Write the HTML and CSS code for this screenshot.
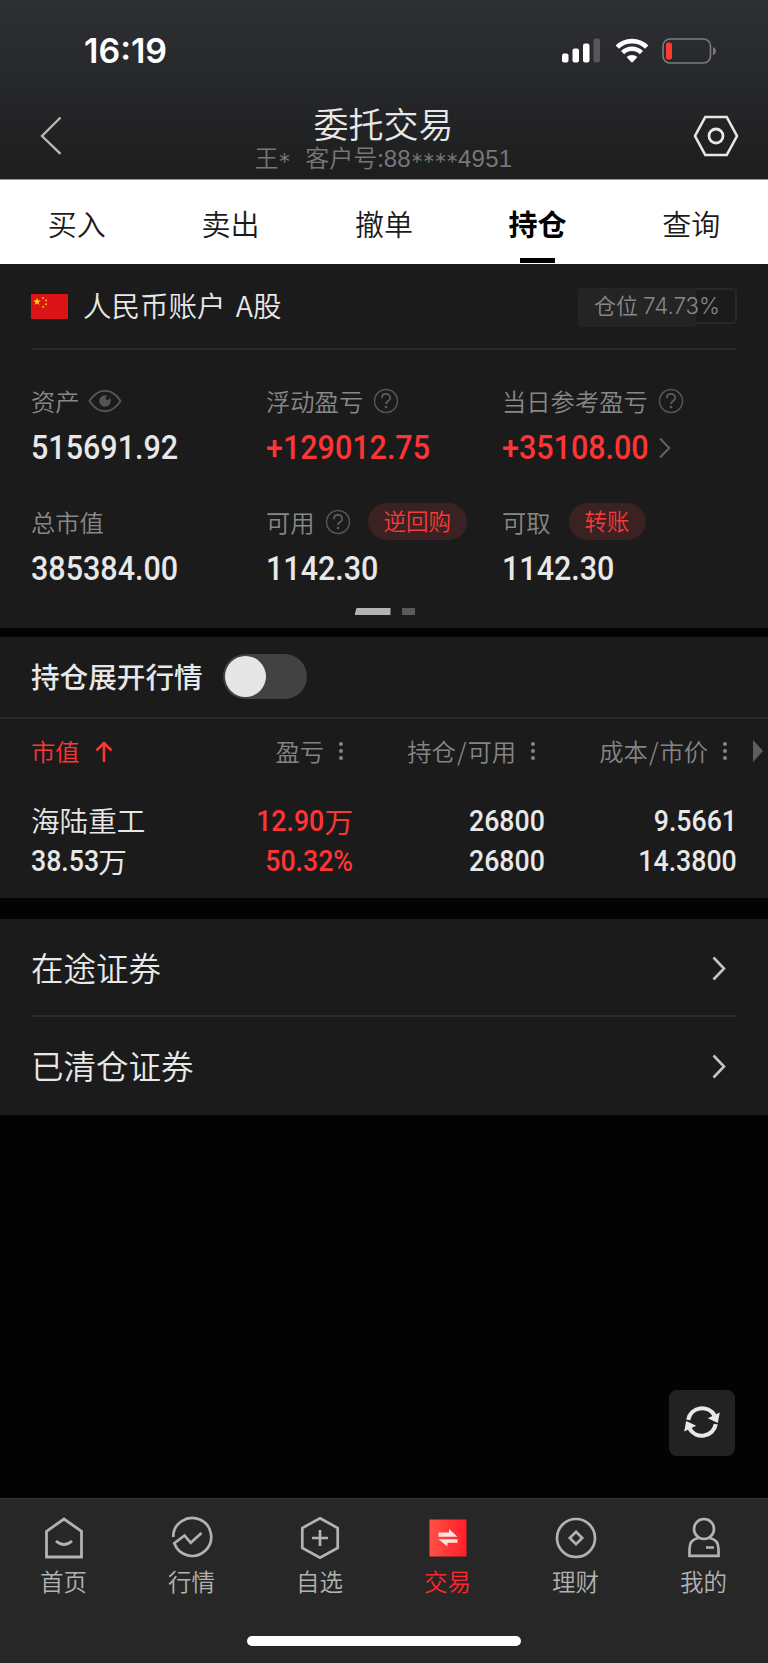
FILE: index.html
```html
<!DOCTYPE html>
<html lang="zh-CN">
<head>
<meta charset="utf-8">
<title>委托交易</title>
<link rel="stylesheet" href="styles.css">
</head>
<body>
<div class="app">
  <header class="header">
    <div class="status">
      <span class="time">16:19</span>
      <div class="status-icons">
        <svg class="signal" width="40" height="26" viewBox="0 0 40 26"><rect x="1" y="15.500" width="6.500" height="9" rx="2" fill="#fff"/><rect x="11.500" y="10.500" width="6.500" height="14" rx="2" fill="#fff"/><rect x="22" y="5.500" width="6.500" height="19" rx="2" fill="#fff"/><rect x="32.500" y="0.500" width="6.500" height="24" rx="2" fill="#56575b"/></svg>
        <svg class="wifi" width="34" height="26" viewBox="0 0 34 26"><g fill="none" stroke="#fff" stroke-width="4.600"><path d="M2.300 9.200a20.800 20.800 0 0 1 29.400 0"/><path d="M7.600 14.600a13.300 13.300 0 0 1 18.800 0"/></g><path d="M11.600 19.100a8 8 0 0 1 10.800 0l-4.300 4.600q-1.100 1.200-2.200 0z" fill="#fff"/></svg>
        <svg class="battery" width="55" height="26" viewBox="0 0 55 26"><rect x="1" y="1" width="47.500" height="24" rx="7" fill="none" stroke="#7b7c7f" stroke-width="1.600"/><path d="M51 9q2.800 1 2.800 4T51 17z" fill="#7b7c7f"/><rect x="4" y="4.500" width="6" height="17" rx="2" fill="#ff3b30"/></svg>
      </div>
    </div>
    <div class="titlebar">
      <svg class="back" width="24" height="40" viewBox="0 0 24 40"><path d="M20.500 1.500 2 20l18.500 17.800" fill="none" stroke="#b9b9b9" stroke-width="2.300"/></svg>
      <div class="titles">
        <h1 class="title">委托交易</h1>
        <p class="subtitle">王<span class="star">*</span><span class="client">客户号:<span class="masked">88</span><span class="stars">****</span><span class="masked">4951</span></span></p>
      </div>
      <svg class="settings" width="46" height="42" viewBox="0 0 46 42"><path d="M12.300 2h21.400L44 21 33.700 40H12.300L2 21z" fill="none" stroke="#e6e6e6" stroke-width="2.600"/><circle cx="23" cy="21" r="7" fill="none" stroke="#e6e6e6" stroke-width="2.800"/></svg>
    </div>
  </header>

  <nav class="tabs">
    <span class="tab">买入</span><span class="tab">卖出</span><span class="tab">撤单</span><span class="tab active">持仓</span><span class="tab">查询</span>
  </nav>

  <section class="account">
    <div class="account-head">
      <svg class="flag" width="37" height="25" viewBox="0 0 37 25"><rect width="37" height="25" rx="1" fill="#db1417"/><path d="m6 4 .9 2.600h2.800L7.500 8.200l.8 2.700L6 9.300l-2.300 1.600.8-2.700-2.200-1.600h2.800z" fill="#ffde00"/><g fill="#f8c800"><circle cx="12" cy="4" r="1"/><circle cx="15" cy="6.500" r="1"/><circle cx="15" cy="10.300" r="1"/><circle cx="12.200" cy="12.800" r="1"/></g></svg>
      <span class="account-name">人民币账户 A股</span>
      <div class="ratio"><span class="ratio-fill"></span><span class="ratio-text">仓位<span class="ratio-num">74.73%</span></span></div>
    </div>
    <div class="stats">
      <div class="stat">
        <div class="label">资产<svg class="eye" width="34" height="24" viewBox="0 0 34 24"><path d="M1.500 12Q8 1.800 17 1.800T32.500 12Q26 22.200 17 22.200T1.500 12z" fill="none" stroke="#555" stroke-width="2"/><circle cx="17" cy="12" r="5.800" fill="#555"/><circle cx="19.500" cy="9" r="2" fill="#1b1b1b"/></svg></div>
        <div class="value"><span class="num">515691.92</span></div>
      </div>
      <div class="stat">
        <div class="label">浮动盈亏<svg class="help" width="26" height="26" viewBox="0 0 26 26"><circle cx="13" cy="13" r="11.500" fill="none" stroke="#555" stroke-width="1.500"/><path d="M8.800 10.200c0-5.600 8.400-5.600 8.400-.3 0 3.200-4.200 3-4.200 6.200" fill="none" stroke="#5e5e5e" stroke-width="1.700"/><circle cx="13" cy="19" r="1.300" fill="#5e5e5e"/></svg></div>
        <div class="value red"><span class="num">+129012.75</span></div>
      </div>
      <div class="stat">
        <div class="label">当日参考盈亏<svg class="help" width="26" height="26" viewBox="0 0 26 26"><circle cx="13" cy="13" r="11.500" fill="none" stroke="#555" stroke-width="1.500"/><path d="M8.800 10.200c0-5.600 8.400-5.600 8.400-.3 0 3.200-4.200 3-4.200 6.200" fill="none" stroke="#5e5e5e" stroke-width="1.700"/><circle cx="13" cy="19" r="1.300" fill="#5e5e5e"/></svg></div>
        <div class="value red"><span class="num">+35108.00</span><svg class="more" width="12" height="22" viewBox="0 0 12 22"><path d="m1 1.500 9.300 9.500L1 20.500" fill="none" stroke="#666" stroke-width="1.800"/></svg></div>
      </div>
      <div class="stat">
        <div class="label">总市值</div>
        <div class="value"><span class="num">385384.00</span></div>
      </div>
      <div class="stat">
        <div class="label">可用<svg class="help" width="26" height="26" viewBox="0 0 26 26"><circle cx="13" cy="13" r="11.500" fill="none" stroke="#555" stroke-width="1.500"/><path d="M8.800 10.200c0-5.600 8.400-5.600 8.400-.3 0 3.200-4.200 3-4.200 6.200" fill="none" stroke="#5e5e5e" stroke-width="1.700"/><circle cx="13" cy="19" r="1.300" fill="#5e5e5e"/></svg><span class="pill">逆回购</span></div>
        <div class="value"><span class="num">1142.30</span></div>
      </div>
      <div class="stat">
        <div class="label">可取<span class="pill transfer">转账</span></div>
        <div class="value"><span class="num">1142.30</span></div>
      </div>
    </div>
    <div class="pager"><span class="page current"></span><span class="page"></span></div>
  </section>

  <section class="positions">
    <div class="expand"><span class="expand-text">持仓展开行情</span><span class="toggle"><span class="knob"></span></span></div>
    <div class="thead">
      <span class="th sorted"><span class="th-text">市值</span><svg class="up" width="18" height="22" viewBox="0 0 18 22"><path d="M9 21V2M1.500 9.500 9 2l7.500 7.500" fill="none" stroke="#ff3535" stroke-width="2.600"/></svg></span>
      <span class="th"><span class="th-text">盈亏</span><i class="dots"></i></span>
      <span class="th"><span class="th-text">持仓<span class="slash">/</span>可用</span><i class="dots"></i></span>
      <span class="th"><span class="th-text">成本<span class="slash">/</span>市价</span><i class="dots"></i></span>
      <i class="scroll-right"></i>
    </div>
    <div class="row">
      <div class="cell name"><span class="stock">海陆重工</span><span class="amount"><b class="num">38.53</b>万</span></div>
      <div class="cell red"><span class="amount"><b class="num">12.90</b>万</span><b class="num">50.32%</b></div>
      <div class="cell"><b class="num">26800</b><b class="num">26800</b></div>
      <div class="cell"><b class="num">9.5661</b><b class="num">14.3800</b></div>
    </div>
  </section>

  <section class="links">
    <div class="link"><span>在途证券</span><svg width="14" height="25" viewBox="0 0 14 25"><path d="m1.500 1.500 10.500 11-10.500 11" fill="none" stroke="#c4c4c4" stroke-width="2.600"/></svg></div>
    <div class="link"><span>已清仓证券</span><svg width="14" height="25" viewBox="0 0 14 25"><path d="m1.500 1.500 10.500 11-10.500 11" fill="none" stroke="#c4c4c4" stroke-width="2.600"/></svg></div>
  </section>

  <div class="spacer">
    <div class="refresh"><svg width="36" height="34" viewBox="0 0 36 34"><g fill="none" stroke="#e8e8e8" stroke-width="4.200"><path d="M4.200 14.800A14.200 14.200 0 0 1 30.500 10.500"/><path d="M31.800 19.200A14.200 14.200 0 0 1 5.500 23.500"/></g><path d="m35.800 7.500-2 10.500-10-4.800z" fill="#e8e8e8"/><path d="m.2 26.500 2-10.500 10 4.800z" fill="#e8e8e8"/></svg></div>
  </div>

  <footer class="bottom">
    <div class="nav">
      <div class="nav-item"><svg width="42" height="44" viewBox="0 0 42 44"><path d="M3.500 15.300 21 3l17.500 12.300V41h-35z" fill="none" stroke="#b2b2b2" stroke-width="2.800"/><path d="M13 25q8 7 16 0" fill="none" stroke="#b2b2b2" stroke-width="2.800"/></svg><span>首页</span></div>
      <div class="nav-item"><svg width="42" height="44" viewBox="0 0 42 44"><path d="M2.200 20.900A19 19 0 1 1 3.300 27.300L13.500 19.500l6.200 7.300L30.500 17" fill="none" stroke="#b2b2b2" stroke-width="2.700"/></svg><span>行情</span></div>
      <div class="nav-item"><svg width="42" height="44" viewBox="0 0 42 44"><path d="M21 2.200 38.700 12v20L21 41.800 3.300 32V12zM13 22h16M21 14v16" fill="none" stroke="#b2b2b2" stroke-width="2.700"/></svg><span>自选</span></div>
      <div class="nav-item on"><svg width="42" height="44" viewBox="0 0 42 44"><defs><linearGradient id="trade"><stop stop-color="#ff5147"/><stop offset="1" stop-color="#ff1f28"/></linearGradient></defs><rect x="2.500" y="3.500" width="37" height="37" fill="url(#trade)"/><path d="M11.500 16.500H22V13l8.500 7.800h-19zM11.500 23.300h19v3.500H20.500v3.700z" fill="#ffe3e3"/></svg><span>交易</span></div>
      <div class="nav-item"><svg width="42" height="44" viewBox="0 0 42 44"><circle cx="21" cy="22" r="19" fill="none" stroke="#b2b2b2" stroke-width="2.700"/><path d="m21 15.800 6.200 6.200-6.200 6.200-6.200-6.200z" fill="none" stroke="#b2b2b2" stroke-width="2.700"/></svg><span>理财</span></div>
      <div class="nav-item"><svg width="42" height="44" viewBox="0 0 42 44"><circle cx="21" cy="13" r="10" fill="none" stroke="#b2b2b2" stroke-width="2.700"/><path d="M15.500 22Q6.500 23.500 6.500 33v6.800h29V33q0-9.500-9-11M23 31.500h8" fill="none" stroke="#b2b2b2" stroke-width="2.700"/></svg><span>我的</span></div>
    </div>
    <div class="home-bar"></div>
  </footer>
</div>
</body>
</html>
```
FILE: styles.css
```css
* { box-sizing: border-box; margin: 0; padding: 0; }
body { background: #030303; }
svg { display: block; flex: none; }
i { font-style: normal; }

.app {
  width: 768px;
  height: 1663px;
  display: flex;
  flex-direction: column;
  font-family: "Noto Sans CJK SC", sans-serif;
  font-weight: 350;
  color: #e8e8e8;
  white-space: nowrap;
  overflow: hidden;
}

/* Header */
.header {
  height: 180px;
  flex: none;
  background: linear-gradient(#2e2f34, #26272a 50%, #1d1d1d);
  border-bottom: 1px solid #999;
}
.status {
  height: 102px;
  padding: 0 51px 0 84px;
  display: flex;
  align-items: center;
  justify-content: space-between;
}
.time {
  font: 600 34px/40px Inter, sans-serif;
  color: #fff;
  letter-spacing: 0;
}
.status-icons { display: flex; gap: 13px; }
.signal { margin-right: 1px; }
.titlebar {
  height: 77px;
  padding: 0 29px 0 40px;
  display: flex;
  justify-content: space-between;
}
.back { margin-top: 14px; }
.titles { text-align: center; margin-left: 10px; }
.title { font-size: 35px; line-height: 42px; font-weight: 350; }
.subtitle { font-size: 24px; line-height: 25px; color: #777; }
.client { margin-left: 15px; }
.masked { font-family: "Liberation Sans", sans-serif; letter-spacing: 0.3px; }
.star, .stars { font-family: Inter, sans-serif; font-weight: 300; letter-spacing: -0.3px; vertical-align: -4px; line-height: 1; }
.settings { margin-top: 13px; }

/* Tabs */
.tabs {
  height: 84px;
  flex: none;
  display: grid;
  grid-template-columns: repeat(5, 1fr);
  background: #fff;
  color: #1b1b1b;
  font-size: 29px;
  line-height: 86px;
  text-align: center;
}
.tab { position: relative; height: 84px; }
.tab.active { font-weight: 700; color: #000; }
.tab.active::after {
  content: "";
  position: absolute;
  left: 59px;
  bottom: 1px;
  width: 35px;
  height: 5px;
  background: #000;
}

/* Account summary */
.account {
  height: 364px;
  flex: none;
  background: #1b1b1b;
  padding: 0 31px;
}
.account-head {
  height: 86px;
  display: flex;
  align-items: center;
  border-bottom: 2px solid #2a2a2a;
}
.account-name { font-size: 28.5px; line-height: 40px; margin-left: 15px; padding-bottom: 2px; word-spacing: 4px; }
.ratio {
  position: relative;
  width: 159px;
  height: 36px;
  margin-left: auto;
  border: 2px solid #272727;
  border-radius: 4px;
}
.ratio-fill {
  position: absolute;
  left: -2px;
  top: -1px;
  width: 118px;
  height: 38px;
  background: #242424;
  border-radius: 4px;
}
.ratio-text {
  position: relative;
  display: block;
  padding-left: 14px;
  font-size: 22px;
  line-height: 29px;
  color: #888;
}
.ratio-num { font: 300 22.300px/29px Inter, sans-serif; margin-left: 5px; }
.stats {
  display: grid;
  grid-template-columns: 235px 236px 1fr;
  grid-template-rows: 121px 121px;
  padding-top: 29px;
}
.label {
  height: 43px;
  display: flex;
  align-items: center;
  font-size: 24.300px;
  line-height: 40px;
  color: #888;
}
.eye { margin-left: 8px; }
.help { margin-left: 10px; }
.pill {
  height: 37px;
  margin-left: 17px;
  padding: 0 16px;
  border-radius: 19px;
  background: #3a2222;
  color: #f83a3a;
  font-size: 22.500px;
  line-height: 35px;
}
.pill.transfer { margin-left: 18px; }
.value { height: 48px; display: flex; align-items: center; padding-top: 3px; }
.num {
  display: block;
  font-family: Roboto, sans-serif;
  font-weight: 500;
}
.value .num {
  font-size: 33.500px;
  line-height: 40px;
  transform: scaleX(.91);
  transform-origin: left;
}
.more { margin-left: -4px; }
.red { color: #ff3535; }
.pager { display: flex; gap: 11px; justify-content: center; margin-top: -13px; padding-left: 1px; }
.page { width: 13px; height: 7px; background: #5a5a5a; }
.page.current { width: 36px; background: #b3b3b3; clip-path: polygon(2px 0, 100% 0, 100% 100%, 0 100%); }

/* Positions */
.positions {
  height: 261px;
  flex: none;
  margin-top: 9px;
  background: #1b1b1b;
}
.expand {
  height: 82px;
  padding: 0 0 2px 31px;
  display: flex;
  align-items: center;
  border-bottom: 2px solid #2a2a2a;
}
.expand-text { font-size: 28.600px; line-height: 40px; font-weight: 500; }
.toggle {
  width: 84px;
  height: 45px;
  margin-left: 20px;
  padding: 2px;
  border-radius: 23px;
  background: #424242;
}
.knob { display: block; width: 41px; height: 41px; border-radius: 50%; background: #e6e6e6; }
.thead, .row {
  display: grid;
  grid-template-columns: 180px 142px 192px 192px;
  padding-left: 31px;
}
.thead { position: relative; height: 66px; font-size: 24.300px; line-height: 62px; color: #858585; }
.th { display: flex; align-items: center; justify-content: flex-end; }
.th-text { padding-bottom: 2px; }
.th.sorted { justify-content: flex-start; color: #ff3535; }
.slash { margin: 0 1px; }
.up { margin-left: 15px; }
.dots {
  width: 4px;
  height: 4px;
  margin: 0 10px 2px 15px;
  border-radius: 50%;
  background: #858585;
  box-shadow: 0 -7px #858585, 0 7px #858585;
}
.scroll-right {
  position: absolute;
  left: 753px;
  top: 21px;
  border-left: 10px solid #5e5e5e;
  border-top: 11px solid transparent;
  border-bottom: 11px solid transparent;
}
.cell {
  display: grid;
  grid-template-rows: 40px 40px;
  padding-top: 16px;
  justify-items: end;
  align-items: center;
  font-size: 28.600px;
  line-height: 40px;
}
.cell .num { font-size: 29.500px; transform: scaleX(.905); transform-origin: right; }
.cell.name { justify-items: start; }
.cell.name .num { transform-origin: left; margin-right: -8px; }
.stock { margin-top: -2px; }
.amount { display: flex; font-weight: 400; }

/* Links */
.links {
  height: 196px;
  flex: none;
  margin-top: 21px;
  padding: 0 31px;
  background: #1b1b1b;
}
.link {
  height: 98px;
  display: flex;
  align-items: center;
  justify-content: space-between;
  padding-right: 11px;
  font-size: 32.500px;
  line-height: 48px;
}
.link span { padding-bottom: 2px; }
.link:first-child { border-bottom: 2px solid #2a2a2a; padding-top: 2px; }

.spacer {
  flex: 1;
  display: flex;
  align-items: flex-end;
  justify-content: flex-end;
  padding: 0 33px 42px 0;
}
.refresh {
  width: 66px;
  height: 66px;
  border-radius: 8px;
  background: #222;
  display: flex;
  justify-content: center;
  padding-top: 15px;
}

/* Bottom navigation */
.bottom {
  height: 165px;
  flex: none;
  background: #272727;
  border-top: 1px solid #333;
  color: #b2b2b2;
}
.nav { height: 137px; display: grid; grid-template-columns: repeat(6, 1fr); }
.nav-item {
  display: flex;
  flex-direction: column;
  align-items: center;
  padding-top: 17px;
  font-size: 23.500px;
  line-height: 40px;
}
.nav-item span { margin: 1px 1px 0 0; }
.nav-item.on { color: #ff2830; }
.home-bar { width: 274px; height: 10px; margin: 0 auto; border-radius: 5px; background: #fff; }
```
